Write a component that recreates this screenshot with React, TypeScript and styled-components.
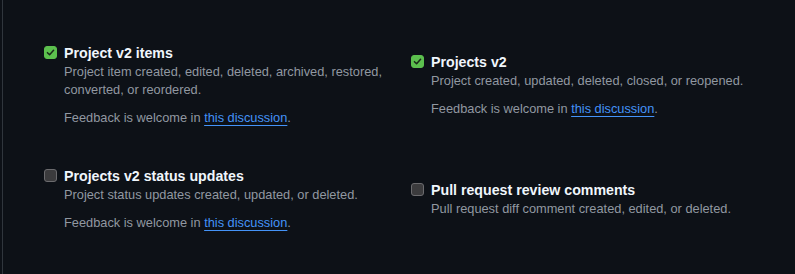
import React from 'react';
import styled, { createGlobalStyle } from 'styled-components';

interface EventItem {
  id: string;
  title: string;
  description: string;
  checked: boolean;
  feedback?: boolean;
}

const GlobalStyle = createGlobalStyle`
  html, body {
    margin: 0;
    padding: 0;
    background: #0d1117;
  }
  body {
    font-family: "Liberation Sans", Arial, sans-serif;
    color: #f0f6fc;
    -webkit-font-smoothing: antialiased;
  }
`;

const Page = styled.div`
  width: 795px;
  height: 274px;
  background: #0d1117;
  overflow: hidden;
`;

const Section = styled.div`
  margin-left: 2px;
  height: 100%;
  border-left: 1px solid #30363d;
  padding: 43px 16px 0 41px;
  box-sizing: border-box;
`;

const EventGrid = styled.div`
  display: grid;
  grid-template-columns: 367px 367px;
  row-gap: 39px;
  align-items: center;
`;

const Item = styled.div`
  display: flex;
  align-items: flex-start;
  gap: 7px;
`;

const Box = styled.span<{ $checked: boolean }>`
  flex: none;
  width: 13px;
  height: 13px;
  margin-top: 3px;
  box-sizing: border-box;
  border-radius: 3px;
  display: flex;
  align-items: center;
  justify-content: center;
  background: ${(p) => (p.$checked ? '#5cc04e' : '#3b3b3d')};
  border: 1px solid ${(p) => (p.$checked ? '#5cc04e' : '#6b6b6e')};
`;

const Body = styled.div`
  display: flex;
  flex-direction: column;
`;

const Title = styled.div`
  font-size: 14.2px;
  font-weight: 700;
  line-height: 20px;
  color: #f0f6fc;
`;

const Description = styled.div`
  font-size: 12.8px;
  line-height: 18px;
  color: #9198a1;
`;

const Note = styled.div`
  margin-top: 10px;
  font-size: 12.8px;
  line-height: 18px;
  color: #9198a1;
`;

const Link = styled.a`
  color: #4493f8;
  text-decoration: underline;
  text-underline-offset: 3px;
  text-decoration-thickness: 1px;
`;

const events: EventItem[] = [
  {
    id: 'project-v2-items',
    title: 'Project v2 items',
    description: 'Project item created, edited, deleted, archived, restored, converted, or reordered.',
    checked: true,
    feedback: true,
  },
  {
    id: 'projects-v2',
    title: 'Projects v2',
    description: 'Project created, updated, deleted, closed, or reopened.',
    checked: true,
    feedback: true,
  },
  {
    id: 'projects-v2-status',
    title: 'Projects v2 status updates',
    description: 'Project status updates created, updated, or deleted.',
    checked: false,
    feedback: true,
  },
  {
    id: 'pr-review-comments',
    title: 'Pull request review comments',
    description: 'Pull request diff comment created, edited, or deleted.',
    checked: false,
  },
];

function Checkbox({ checked }: { checked: boolean }): JSX.Element {
  return (
    <Box $checked={checked}>
      {checked && (
        <svg width="9" height="9" viewBox="0 0 10 10" fill="none">
          <path d="M1.6 5.2 L4 7.5 L8.4 2.6" stroke="#1b2a1a" strokeWidth="1.7" strokeLinecap="round" strokeLinejoin="round" />
        </svg>
      )}
    </Box>
  );
}

function App(): JSX.Element {
  return (
    <Page>
      <GlobalStyle />
      <Section>
        <EventGrid>
          {events.map((ev) => (
            <Item key={ev.id}>
              <Checkbox checked={ev.checked} />
              <Body>
                <Title>{ev.title}</Title>
                <Description>{ev.description}</Description>
                {ev.feedback && (
                  <Note>
                    Feedback is welcome in <Link href="#">this discussion</Link>.
                  </Note>
                )}
              </Body>
            </Item>
          ))}
        </EventGrid>
      </Section>
    </Page>
  );
}

export default App;
